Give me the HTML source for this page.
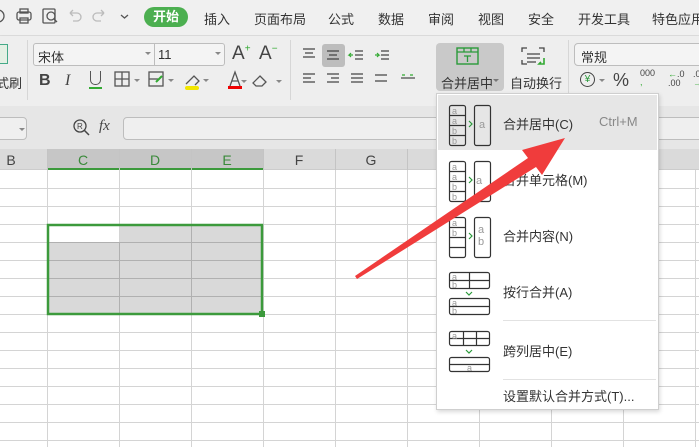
<!DOCTYPE html><html><head><meta charset="utf-8"><style>
*{margin:0;padding:0;box-sizing:border-box}
body{width:699px;height:447px;overflow:hidden;position:relative;background:#fff;font-family:"Liberation Sans","Noto Sans CJK SC",sans-serif;color:#333}
.a{position:absolute}
.t{font-size:13px;white-space:nowrap}
</style></head><body>
<!-- tab bar -->
<div class="a" style="left:0;top:0;width:699px;height:36px;background:#f0f0f0;border-bottom:1px solid #dcdcdc"></div>
<svg class="a" style="left:0;top:0" width="140" height="36"><g fill="none" stroke="#555" stroke-width="1.3"><circle cx="-2" cy="16" r="6"/><rect x="17" y="12" width="14" height="8" rx="2"/><rect x="20" y="9" width="8" height="4"/><rect x="20" y="18" width="8" height="5"/><rect x="43" y="9" width="12" height="14" rx="1"/><circle cx="51" cy="16" r="4"/><path d="M54 19l3 3"/></g><g fill="none" stroke="#bbb" stroke-width="1.3"><path d="M70 13h7a4 4 0 0 1 0 8h-4M70 13l3-3M70 13l3 3"/><path d="M104 13h-7a4 4 0 0 0 0 8h4M104 13l-3-3M104 13l-3 3"/></g><path d="M121 15l3.5 3 3.5-3" fill="none" stroke="#555" stroke-width="1.3"/></svg>
<div class="a" style="left:144px;top:7px;width:44px;height:20px;border-radius:10px;background:#4caf50;color:#fff;font-size:13px;font-weight:bold;text-align:center;line-height:20px">开始</div>
<div class="a t" style="left:204px;top:9px">插入</div>
<div class="a t" style="left:254px;top:9px">页面布局</div>
<div class="a t" style="left:328px;top:9px">公式</div>
<div class="a t" style="left:378px;top:9px">数据</div>
<div class="a t" style="left:428px;top:9px">审阅</div>
<div class="a t" style="left:478px;top:9px">视图</div>
<div class="a t" style="left:528px;top:9px">安全</div>
<div class="a t" style="left:578px;top:9px">开发工具</div>
<div class="a t" style="left:652px;top:9px">特色应用</div>
<!-- ribbon -->
<div class="a" style="left:0;top:36px;width:699px;height:70px;background:#eeeeee;box-shadow:0 2px 3px rgba(0,0,0,.12)"></div>
<div class="a" style="left:0;top:44px;width:8px;height:20px;border:1px solid #4a8;border-left:none;background:#e4f0e4"></div>
<div class="a t" style="left:-4px;top:73px">式刷</div>
<div class="a" style="left:27px;top:40px;width:1px;height:60px;background:#d6d6d6"></div>
<div class="a" style="left:33px;top:43px;width:192px;height:23px;border:1px solid #bdbdbd;border-radius:3px;background:#f4f4f4"></div>
<div class="a" style="left:154px;top:44px;width:1px;height:21px;background:#bdbdbd"></div>
<div class="a t" style="left:38px;top:47px">宋体</div>
<div class="a t" style="left:158px;top:47px">11</div>
<div class="a" style="left:145px;top:52px;border:3px solid transparent;border-top-color:#888"></div>
<div class="a" style="left:215px;top:52px;border:3px solid transparent;border-top-color:#888"></div>
<div class="a" style="left:232px;top:43px;font-size:19px;color:#444">A<sup style="color:#3a3;font-size:10px">+</sup></div>
<div class="a" style="left:259px;top:43px;font-size:19px;color:#444">A<sup style="color:#3a3;font-size:10px">−</sup></div>
<div class="a" style="left:39px;top:72px;font-size:16px;font-weight:bold;color:#444">B</div>
<div class="a" style="left:65px;top:72px;font-size:16px;font-style:italic;font-family:'Liberation Serif';color:#444">I</div>
<div class="a" style="left:90px;top:71px;width:11px;height:14px;border:1.3px solid #555;border-top:none;border-radius:0 0 5px 5px"></div>
<div class="a" style="left:89px;top:87px;width:13px;height:1.5px;background:#3a3"></div>
<svg class="a" style="left:110px;top:66px" width="180" height="30"><g fill="none" stroke="#555" stroke-width="1.3"><rect x="5" y="6" width="14" height="14"/><path d="M12 6v14M5 13h14"/><rect x="39" y="6" width="14" height="14"/><path d="M39 13h9"/><path d="M150 10l6 6-4 4h-6l-3-3z"/><path d="M76 18l8-8 5 5-4 4"/><path d="M120 20l5-14 5 14M122 15h6"/></g><path d="M46 16l6-6" stroke="#3a3" stroke-width="2"/><rect x="75" y="20" width="14" height="4" rx="2" fill="#f2e600"/><rect x="118" y="20" width="14" height="3" fill="#e00"/><g fill="#888"><path d="M24 13h6l-3 3z"/><path d="M58 13h6l-3 3z"/><path d="M93 13h6l-3 3z"/><path d="M131 14h6l-3 3z"/><path d="M166 14h6l-3 3z"/></g></svg>
<div class="a" style="left:290px;top:40px;width:1px;height:60px;background:#d6d6d6"></div>
<div class="a" style="left:322px;top:44px;width:23px;height:23px;background:#bdbdbd;border-radius:3px"></div>
<svg class="a" style="left:298px;top:44px" width="125" height="50"><g stroke="#444" stroke-width="1.2"><path d="M5 5h12M7 9h8M5 13h12"/><path d="M29 7h12M31 11h8M29 15h12"/><path d="M5 30h12M5 34h8M5 38h12"/><path d="M29 30h12M33 34h8M29 38h12"/><path d="M53 30h12M53 34h12M53 38h12"/><path d="M57 11h8M57 15h8M57 7h8"/><path d="M83 7h8M83 11h8M83 15h8"/><path d="M77 31h12M77 37h12"/><path d="M103 34h14"/></g><g stroke="#3a3" stroke-width="1.2" fill="none"><path d="M55 11h-4l2-2M51 11l2 2"/><path d="M77 11h4l-2-2M81 11l-2 2"/><path d="M104 31h3M112 31h3"/></g></svg>
<div class="a" style="left:436px;top:43px;width:68px;height:48px;background:#c9c9c9;border-radius:4px"></div>
<svg class="a" style="left:455px;top:46px" width="26" height="22"><rect x="2" y="2" width="21" height="16" fill="none" stroke="#2a9a3a" stroke-width="1.4"/><path d="M2 6h21M9 2v4M16 2v4M9 10h7M12.5 10v6" stroke="#2a9a3a" stroke-width="1.3"/></svg>
<div class="a t" style="left:441px;top:73px">合并居中</div>
<div class="a" style="left:493px;top:79px;border:3px solid transparent;border-top-color:#777"></div>
<svg class="a" style="left:520px;top:46px" width="26" height="22"><g fill="none" stroke="#444" stroke-width="1.3"><path d="M2 6V2h5M19 2h5v4M2 14v4h5"/><path d="M7 8h13M7 12h13M7 16h9"/></g><path d="M24 12v6h-5l2-2" stroke="#3a3" stroke-width="1.6" fill="none"/></svg>
<div class="a t" style="left:510px;top:73px">自动换行</div>
<div class="a" style="left:568px;top:40px;width:1px;height:60px;background:#d6d6d6"></div>
<div class="a" style="left:574px;top:43px;width:130px;height:23px;border:1px solid #bdbdbd;border-radius:4px;background:#f4f4f4"></div>
<div class="a t" style="left:581px;top:47px">常规</div>
<div class="a" style="left:580px;top:72px;width:15px;height:15px;border:1.3px solid #444;border-radius:50%;font-size:10px;text-align:center;line-height:13px;color:#2a9a3a">¥</div>
<div class="a" style="left:599px;top:79px;border:3px solid transparent;border-top-color:#888"></div>
<div class="a" style="left:613px;top:70px;font-size:18px;color:#444">%</div>
<div class="a" style="left:640px;top:69px;font-size:9px;color:#444;line-height:9px">000<br><span style="color:#3a3">,</span></div>
<div class="a" style="left:668px;top:70px;font-size:9px;color:#444;line-height:9px"><span style="color:#3a3">←</span>.0<br>.00</div>
<div class="a" style="left:693px;top:70px;font-size:9px;color:#444;line-height:9px">.0<br><span style="color:#3a3">→</span></div>
<!-- formula bar -->
<div class="a" style="left:0;top:106px;width:699px;height:43px;background:#e6e6e6"></div>
<div class="a" style="left:-5px;top:117px;width:32px;height:23px;border:1px solid #bdbdbd;border-radius:4px;background:#efefef"></div>
<div class="a" style="left:19px;top:128px;border:3px solid transparent;border-top-color:#888"></div>
<svg class="a" style="left:72px;top:118px" width="20" height="20"><circle cx="8" cy="8" r="6" fill="none" stroke="#444" stroke-width="1.3"/><path d="M12 12l5 5" stroke="#444" stroke-width="1.5"/><text x="5" y="11" font-size="8" fill="#444">R</text></svg>
<div class="a" style="left:99px;top:118px;font-size:15px;font-style:italic;font-family:'Liberation Serif';color:#444">fx</div>
<div class="a" style="left:123px;top:117px;width:600px;height:23px;border:1px solid #bdbdbd;border-radius:4px;background:#efefef"></div>
<!-- column headers -->
<div class="a" style="left:0;top:149px;width:699px;height:21px;background:#dadada;border-bottom:1px solid #ccc"></div>
<div class="a" style="left:47px;top:149px;width:216px;height:21px;background:#c6c6c6;border-bottom:2px solid #3c9a3c"></div>
<svg class="a" style="left:0;top:149px" width="699" height="298">
<g stroke="#c4c4c4"><path d="M47.5 0v21M119.5 0v21M191.5 0v21M263.5 0v21M335.5 0v21M407.5 0v21"/></g>
<g font-size="14" text-anchor="middle" font-family="Liberation Sans"><text x="11" y="16" fill="#444">B</text><text x="83" y="16" fill="#3a8a3a">C</text><text x="155" y="16" fill="#3a8a3a">D</text><text x="227" y="16" fill="#3a8a3a">E</text><text x="299" y="16" fill="#444">F</text><text x="371" y="16" fill="#444">G</text></g>
<rect x="47" y="75" width="216" height="90" fill="#d9d9d9"/><rect x="49" y="77" width="70" height="16" fill="#fff"/>
<g stroke="#d4d4d4"><path d="M47.5 21v277M119.5 21v277M191.5 21v277M263.5 21v277M335.5 21v277M407.5 21v277M479.5 21v277M551.5 21v277M623.5 21v277M695.5 21v277"/>
<path d="M0 39.5h699M0 57.5h699M0 75.5h699M0 93.5h699M0 111.5h699M0 129.5h699M0 147.5h699M0 165.5h699M0 183.5h699M0 201.5h699M0 219.5h699M0 237.5h699M0 255.5h699M0 273.5h699M0 291.5h699"/></g>
<g stroke="#b0b0b0"><path d="M119.5 93v72M191.5 77v88M49 93.5h214M49 111.5h214M49 129.5h214M49 147.5h214"/></g>
<rect x="48" y="76" width="214" height="89" fill="none" stroke="#3c9a3c" stroke-width="2.5"/><rect x="259" y="162" width="6" height="6" fill="#3c9a3c"/>
</svg>
<!-- dropdown menu -->
<div class="a" style="left:436px;top:93px;width:223px;height:317px;background:#fff;border:1px solid #cfcfcf;box-shadow:1px 2px 4px rgba(0,0,0,.15)"></div>
<div class="a" style="left:438px;top:95px;width:219px;height:55px;background:#e6e6e6"></div>
<div class="a" style="left:503px;top:320px;width:153px;height:1px;background:#e2e2e2"></div>
<div class="a" style="left:503px;top:379px;width:153px;height:1px;background:#e2e2e2"></div>
<div class="a t" style="left:503px;top:114px">合并居中(C)</div>
<div class="a t" style="left:599px;top:114px;color:#888">Ctrl+M</div>
<div class="a t" style="left:503px;top:170px">合并单元格(M)</div>
<div class="a t" style="left:503px;top:226px">合并内容(N)</div>
<div class="a t" style="left:503px;top:282px">按行合并(A)</div>
<div class="a t" style="left:503px;top:341px">跨列居中(E)</div>
<div class="a t" style="left:503px;top:386px">设置默认合并方式(T)...</div>
<svg class="a" style="left:436px;top:93px" width="70" height="290" font-family="Liberation Sans" font-size="9" fill="#999">
<g fill="none" stroke="#333" stroke-width="1.2">
<rect x="13.5" y="12.5" width="16" height="40" rx="2"/><path d="M13.5 22.5h16M13.5 32.5h16M13.5 42.5h16"/><rect x="38.5" y="12.5" width="16" height="40" rx="2"/>
<rect x="13.5" y="68.5" width="16" height="40" rx="2"/><path d="M13.5 78.5h16M13.5 88.5h16M13.5 98.5h16"/><rect x="38.5" y="68.5" width="16" height="40" rx="2"/>
<rect x="13.5" y="124.5" width="16" height="40" rx="2"/><path d="M13.5 134.5h16M13.5 144.5h16M13.5 154.5h16"/><rect x="38.5" y="124.5" width="16" height="40" rx="2"/>
<rect x="13.5" y="179.5" width="40" height="16" rx="2"/><path d="M13.5 187.5h40M33.5 179.5v16"/><rect x="13.5" y="205.5" width="40" height="16" rx="2"/><path d="M13.5 213.5h40"/>
<rect x="13.5" y="238.5" width="40" height="14" rx="2"/><path d="M13.5 245.5h40M27.5 238.5v14M40.5 238.5v14"/><rect x="13.5" y="264.5" width="40" height="14" rx="2"/><path d="M13.5 271.5h40"/>
</g>
<g fill="none" stroke="#2a9a3a" stroke-width="1.2"><path d="M33 28l3 3-3 3"/><path d="M33 84l3 3-3 3"/><path d="M33 140l3 3-3 3"/><path d="M30 199l3 3 3-3"/><path d="M30 257l3 3 3-3"/></g>
<text x="16" y="21">a</text><text x="16" y="31">a</text><text x="16" y="41">b</text><text x="16" y="51">b</text><text x="43" y="35" font-size="11">a</text>
<text x="16" y="77">a</text><text x="16" y="87">a</text><text x="16" y="97">b</text><text x="16" y="107">b</text><text x="40" y="91" font-size="11">a</text>
<text x="16" y="133">a</text><text x="16" y="143">b</text><text x="42" y="140" font-size="11">a</text><text x="42" y="152" font-size="11">b</text>
<text x="16" y="187">a</text><text x="16" y="195">b</text><text x="16" y="213">a</text><text x="16" y="221">b</text>
<text x="16" y="246">a</text><text x="31" y="278">a</text>
</svg>
<!-- red arrow -->
<svg class="a" style="left:0;top:0" width="699" height="447"><path d="M355 276L528 158 522 150 565 138 542 175 536 167 357 279Z" fill="#f03c3c"/></svg>
</body></html>
